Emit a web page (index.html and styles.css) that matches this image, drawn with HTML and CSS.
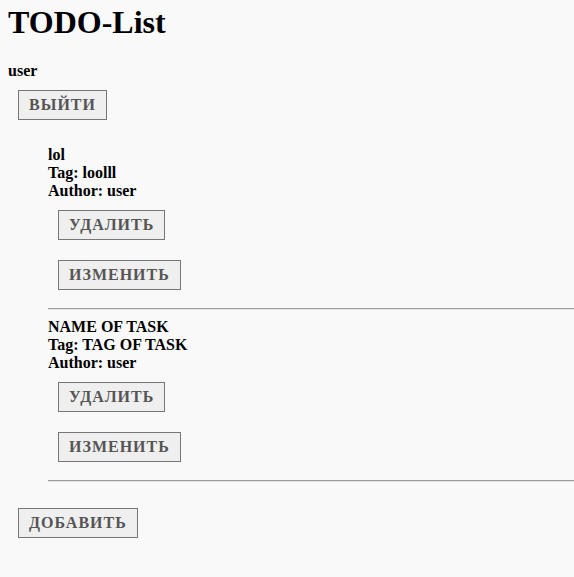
FILE: index.html
```html
<!DOCTYPE html>
<html lang="ru">
<head>
<meta charset="utf-8">
<title>TODO-List</title>
<link rel="stylesheet" href="styles.css">
</head>
<body>
<h1 class="title">TODO-List</h1>
<div class="user">user</div>
<button class="btn btn-outer">ВЫЙТИ</button>
<ul class="tasks">
  <li class="task">
    <div class="task-info">
      <div>lol</div>
      <div>Tag: loolll</div>
      <div>Author: user</div>
    </div>
    <div class="actions">
      <button class="btn">УДАЛИТЬ</button>
      <button class="btn">ИЗМЕНИТЬ</button>
    </div>
    <hr class="sep">
  </li>
  <li class="task">
    <div class="task-info">
      <div>NAME OF TASK</div>
      <div>Tag: TAG OF TASK</div>
      <div>Author: user</div>
    </div>
    <div class="actions">
      <button class="btn">УДАЛИТЬ</button>
      <button class="btn">ИЗМЕНИТЬ</button>
    </div>
    <hr class="sep">
  </li>
</ul>
<button class="btn btn-outer">ДОБАВИТЬ</button>
</body>
</html>
```

FILE: styles.css
```css
html {
  background: #f9f9f9;
}
body {
  margin: 0;
  padding: 0 0 0 8px;
  font-family: "Liberation Serif", "Times New Roman", serif;
  font-size: 16px;
  color: #000;
  background: #f9f9f9;
}
.title {
  font-size: 32px;
  font-weight: bold;
  margin: 4px 0 21px;
}
.user {
  font-weight: bold;
}
.btn {
  display: block;
  font-family: "Liberation Serif", "Times New Roman", serif;
  font-size: 16px;
  font-weight: bold;
  letter-spacing: 1px;
  color: #555;
  background: #efefef;
  border: 1px solid #767676;
  border-radius: 0;
  padding: 5px 10px;
  line-height: normal;
}
.btn-outer {
  margin: 10px;
}
.tasks {
  list-style: none;
  margin: 26px 0;
  padding: 0 0 0 40px;
}
.task-info {
  font-weight: bold;
}
.actions {
  display: flex;
  flex-direction: column;
  align-items: flex-start;
  gap: 20px;
  padding: 10px;
}
.sep {
  margin: 8px 0;
  border: 0;
  border-top: 1px solid #9a9a9a;
  border-bottom: 1px solid #e6e6e6;
  height: 0;
}
```
